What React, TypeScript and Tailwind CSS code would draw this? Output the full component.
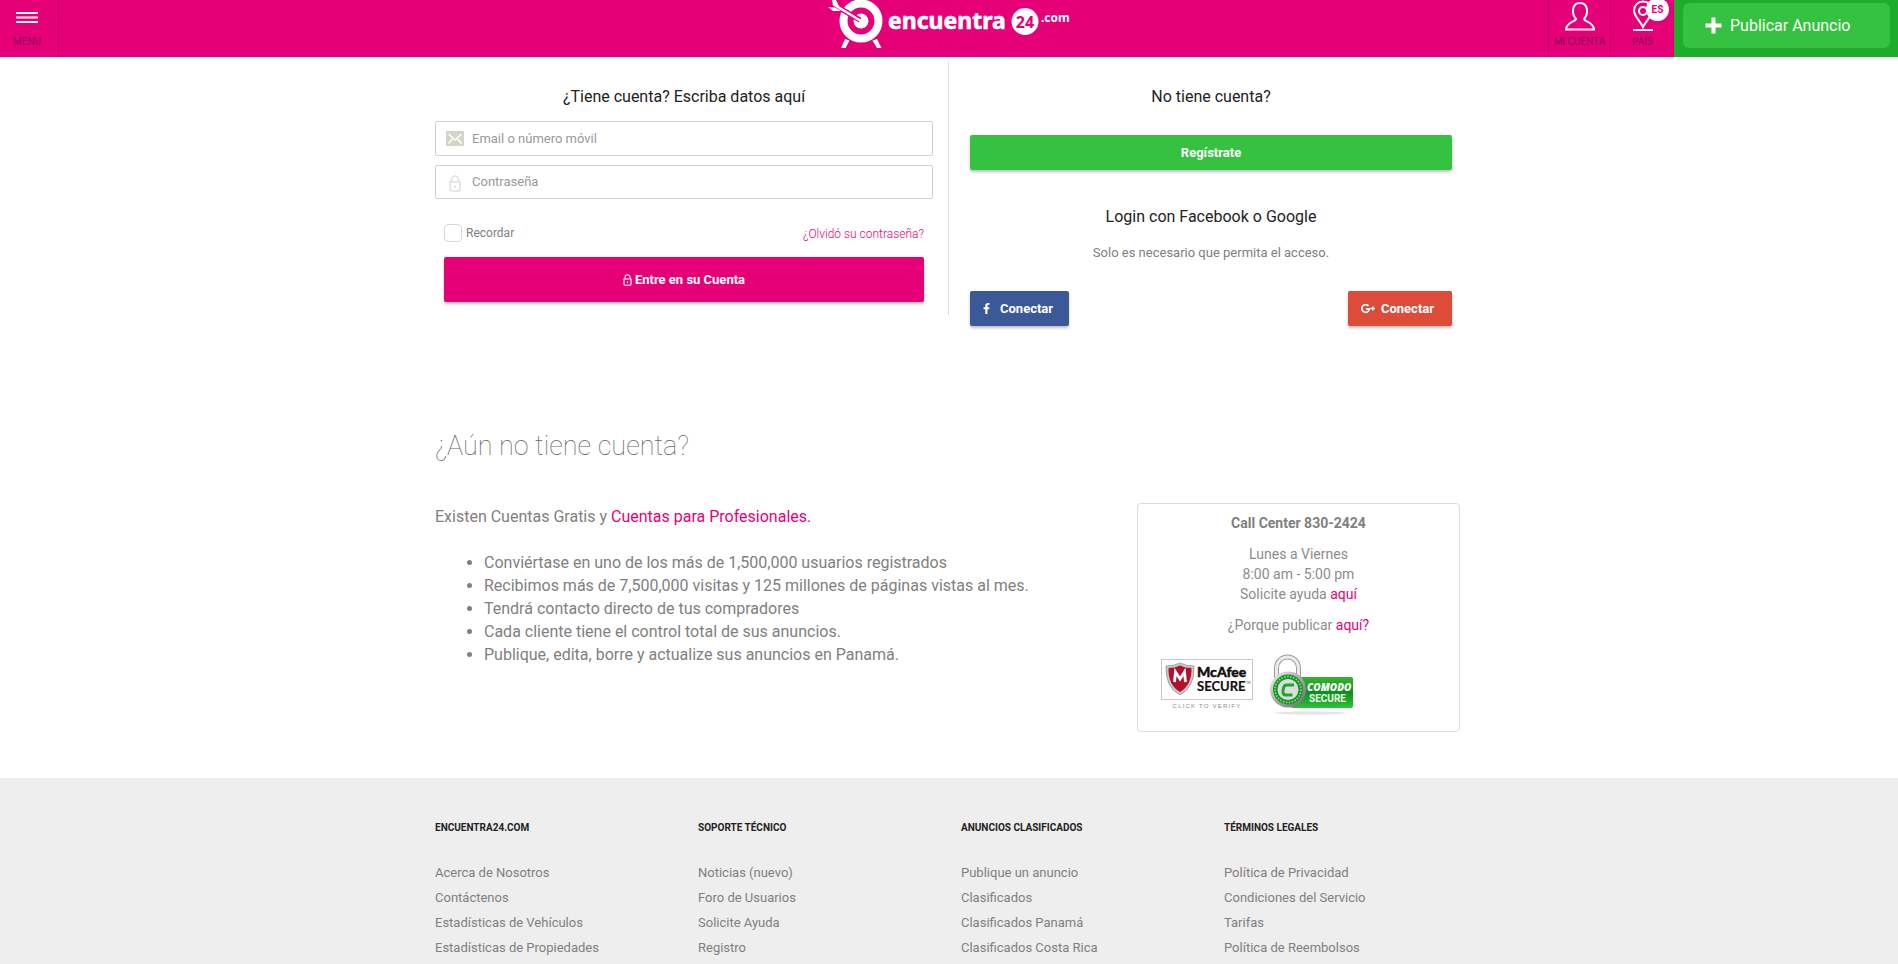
import {FC, ReactNode, useState} from "react";
import {FaFacebookF} from "react-icons/fa";

const footerColumns = [
    {
        title: "ENCUENTRA24.COM",
        links: ["Acerca de Nosotros", "Contáctenos", "Estadísticas de Vehículos", "Estadísticas de Propiedades"],
    },
    {
        title: "SOPORTE TÉCNICO",
        links: ["Noticias (nuevo)", "Foro de Usuarios", "Solicite Ayuda", "Registro"],
    },
    {
        title: "ANUNCIOS CLASIFICADOS",
        links: ["Publique un anuncio", "Clasificados", "Clasificados Panamá", "Clasificados Costa Rica"],
    },
    {
        title: "TÉRMINOS LEGALES",
        links: ["Política de Privacidad", "Condiciones del Servicio", "Tarifas", "Política de Reembolsos"],
    },
];

const benefits = [
    "Conviértase en uno de los más de 1,500,000 usuarios registrados",
    "Recibimos más de 7,500,000 visitas y 125 millones de páginas vistas al mes.",
    "Tendrá contacto directo de tus compradores",
    "Cada cliente tiene el control total de sus anuncios.",
    "Publique, edita, borre y actualize sus anuncios en Panamá.",
];

const Logo:FC = () => (
    <svg width="244" height="57" viewBox="0 0 244 57" role="img" aria-label="encuentra24.com">
        <circle cx="34" cy="21" r="17.5" fill="none" stroke="#fff" strokeWidth="8"/>
        <circle cx="34" cy="21" r="7.5" fill="#fff"/>
        <path d="M9 6 L33 20" stroke="#e60078" strokeWidth="5"/>
        <path d="M6 4 L34 21" stroke="#fff" strokeWidth="2.4"/>
        <path d="M1 7 L8 7.5 L14 11 L6 11 Z M5 0 L9 0 L12 6 L13 10 L6 5 Z" fill="#fff"/>
        <path d="M18 39 L22.5 40.5 L18.500 48 L14 48 Z M50 39 L45.500 40.5 L50 48 L54.500 48 Z" fill="#fff"/>
        <text x="61" y="29" fill="#fff" stroke="#fff" strokeWidth="0.6" fontFamily="'Noto Sans', 'Open Sans', sans-serif" fontWeight="700" fontSize="23">encuentra</text>
        <circle cx="198" cy="21.500" r="13.5" fill="#fff"/>
        <text x="198" y="27.500" fill="#e60078" textAnchor="middle" fontFamily="'Noto Sans', sans-serif" fontWeight="700" fontSize="16">24</text>
        <text x="214" y="22" fill="#fff" fontFamily="'Noto Sans', sans-serif" fontWeight="700" fontSize="12">.com</text>
    </svg>
);

const LockIcon:FC<{className?: string}> = ({className}) => (
    <svg className={className} viewBox="0 0 12 17" fill="none" stroke="currentColor" strokeWidth="1.6">
        <path d="M2.500 7 V4.500 a3.500 3.500 0 0 1 7 0 V7"/>
        <path d="M1 7 H11 V14 a2 2 0 0 1 -2 2 H3 a2 2 0 0 1 -2 -2 Z"/>
        <path d="M6 10.500 V13"/>
    </svg>
);

const MailIcon:FC = () => (
    <svg width="18" height="15" viewBox="0 0 18 15">
        <rect width="18" height="15" rx="1" fill="#d3d5c8"/>
        <path d="M2.500 3 L9 9 L15.500 3 M2.500 12.500 L6.500 8 M15.500 12.500 L11.500 8" stroke="#fff" strokeWidth="1.6" fill="none"/>
    </svg>
);

const McAfeeBadge:FC = () => (
    <svg width="93" height="62" viewBox="0 0 93 62" role="img" aria-label="McAfee SECURE">
        <rect x="0.5" y="5.500" width="91" height="40" fill="#fff" stroke="#c8c8c8"/>
        <path d="M5 12 Q13 12 19 9 Q25 12 33 12 Q34 33 19 41 Q4 33 5 12 Z" fill="#c3c9cf" stroke="#8e979f" strokeWidth="0.8"/>
        <path d="M7.500 14 Q14 14 19 11.500 Q24 14 30.500 14 Q31 31 19 38 Q7 31 7.500 14 Z" fill="#b3112a"/>
        <path d="M13.500 28 L14.500 18 L19 25 L23.500 18 L24.500 28" fill="none" stroke="#fff" strokeWidth="2.800"/>
        <text x="36" y="23" fill="#111" stroke="#111" strokeWidth="0.4" fontFamily="Lato, sans-serif" fontWeight="900" fontSize="14">McAfee</text>
        <text x="36" y="37" fill="#111" stroke="#111" strokeWidth="0.2" fontFamily="Lato, sans-serif" fontWeight="700" fontSize="13">SECURE</text>
        <text x="85" y="30" fill="#444" fontFamily="Lato, sans-serif" fontSize="3">TM</text>
        <text x="46" y="54" fill="#8c8c8c" textAnchor="middle" fontFamily="'Liberation Sans', sans-serif" fontSize="6" letterSpacing="1.200">CLICK TO VERIFY</text>
    </svg>
);

const ComodoBadge:FC = () => (
    <svg width="86" height="62" viewBox="0 0 86 62" role="img" aria-label="Comodo SECURE">
        <defs>
            <linearGradient id="green" x1="0" y1="0" x2="0" y2="1">
                <stop offset="0" stopColor="#35b52f"/>
                <stop offset="0.5" stopColor="#0c8f1b"/>
                <stop offset="1" stopColor="#2fc23a"/>
            </linearGradient>
            <linearGradient id="metal" x1="0" y1="0" x2="1" y2="1">
                <stop offset="0" stopColor="#f5f5f5"/>
                <stop offset="0.5" stopColor="#a9a9a9"/>
                <stop offset="1" stopColor="#6a6a6a"/>
            </linearGradient>
        </defs>
        <ellipse cx="40" cy="59" rx="36" ry="1.500" fill="#e4e4e4"/>
        <rect x="21" y="23" width="62" height="31" rx="2" fill="url(#green)"/>
        <path d="M6.500 26 V14 a11 11 0 0 1 22 0 V26" fill="none" stroke="#9b9b9b" strokeWidth="5"/>
        <path d="M6.500 26 V14 a11 11 0 0 1 22 0 V26" fill="none" stroke="#ececec" strokeWidth="3"/>
        <circle cx="18" cy="35.500" r="18" fill="url(#metal)"/>
        <circle cx="18" cy="35.500" r="15" fill="#17962a"/>
        <circle cx="18" cy="35.500" r="13" fill="none" stroke="#8fe08f" strokeWidth="1.500" strokeDasharray="1.500 1.500"/>
        <circle cx="18" cy="35.500" r="10.500" fill="#dcdcdc"/>
        <path d="M24 31 H17 Q14 31 13.500 34 L13 37 Q12.500 41 16 41 H22.500" fill="none" stroke="#1ea62c" strokeWidth="3"/>
        <text x="37" y="37" fill="#fff" fontFamily="'Open Sans', sans-serif" fontWeight="800" fontStyle="italic" fontSize="10">COMODO</text>
        <text x="39" y="48" fill="#e9f7e9" fontFamily="Roboto, sans-serif" fontWeight="700" fontSize="10">SECURE</text>
    </svg>
);

const PinkLink:FC<{children: ReactNode}> = ({children}) => (
    <a href="#" className="text-[#e60078]">{children}</a>
);

const Header:FC = () => (
    <header className="grid grid-cols-[1fr_auto_1fr] h-[57px] bg-[#e60078]">
        <button className="flex flex-col items-center w-[59px] pt-3 pr-1 border-r border-[#c30070] text-[10px] leading-3 text-[#8a0a5c]">
            <svg width="22" height="11" viewBox="0 0 22 11" className="mb-[13px]">
                <path d="M0 1 H22 M0 5.500 H22 M0 10 H22" stroke="#fff" strokeWidth="2"/>
            </svg>
            MENU
        </button>
        <a href="#"><Logo/></a>
        <div className="flex justify-end">
            <a href="#" className="flex flex-col items-center w-[62px] border-l border-[#c30070] text-[10px] leading-3 text-[#8a0a5c]">
                <svg width="32" height="36" viewBox="0 0 32 36" fill="none" stroke="#fff" strokeWidth="2">
                    <path d="M12 19 C7.500 14 7.500 3 16 3 C24.500 3 24.500 14 20 19 C20 22 29 21 30 29.500 H2 C3 21 12 22 12 19 Z"/>
                </svg>
                MI CUENTA
            </a>
            <a href="#" className="relative flex flex-col items-center w-16 border-l border-[#c30070] text-[10px] leading-3 text-[#8a0a5c]">
                <svg width="22" height="36" viewBox="0 0 22 36" fill="none" stroke="#fff" strokeWidth="2">
                    <path d="M11 27 C8 21 2 16 2 10.500 a9 9 0 0 1 18 0 C20 16 14 21 11 27 Z"/>
                    <circle cx="11" cy="11" r="4"/>
                    <path d="M1 30 H21"/>
                </svg>
                PAÍS
                <span className="absolute -top-0.5 left-[35px] flex items-center justify-center size-[23px] rounded-full bg-white text-[10px] font-bold text-[#e60078]">ES</span>
            </a>
            <div className="pt-[3px] pl-[9px] pr-2 bg-[#1dad2b]">
                <button className="flex items-center gap-2 w-[207px] h-[45px] pl-[22px] rounded-md bg-[#34c240] text-base text-white">
                    <svg width="17" height="17" viewBox="0 0 17 17">
                        <path d="M8.500 0.500 V16.500 M0.500 8.500 H16.500" stroke="#fff" strokeWidth="4"/>
                    </svg>
                    Publicar Anuncio
                </button>
            </div>
        </div>
    </header>
);

const LoginForm:FC = () => {
    const [email, setEmail] = useState("");
    const [password, setPassword] = useState("");

    return (
        <form className="self-start pt-[23px] pr-[15px] pb-[13px] border-r border-[#dcdcdc]">
            <h2 className="mb-3 text-center text-base leading-6 text-[#222]">¿Tiene cuenta? Escriba datos aquí</h2>
            <label className="flex items-center gap-2 h-[35px] pl-2.5 mb-[9px] border border-[#cfcfcb] rounded-xs">
                <MailIcon/>
                <input
                    type="text"
                    aria-label="Email o número móvil"
                    value={email}
                    onChange={(e) => setEmail(e.target.value)}
                    className="flex-1 text-[13px] outline-none placeholder:text-[#999]"
                    placeholder="Email o número móvil"
                />
            </label>
            <label className="flex items-center gap-2 h-[34px] pl-2.5 mb-[25px] border border-[#cfcfcb] rounded-xs">
                <span className="flex justify-center w-[18px] pt-0.5 text-[#e0e0dc]"><LockIcon className="w-3 h-[17px]"/></span>
                <input
                    type="password"
                    aria-label="Contraseña"
                    value={password}
                    onChange={(e) => setPassword(e.target.value)}
                    className="flex-1 text-[13px] outline-none placeholder:text-[#999]"
                    placeholder="Contraseña"
                />
            </label>
            <div className="px-[9px]">
                <div className="flex items-center justify-between h-[18px] mb-[15px]">
                    <label className="flex items-center gap-1 text-xs">
                        <input type="checkbox" className="appearance-none size-[18px] border border-[#d8d8d0] rounded-sm bg-white"/>
                        Recordar
                    </label>
                    <a href="#" className="pt-0.5 text-xs font-light text-[#e60078]">¿Olvidó su contraseña?</a>
                </div>
                <button
                    type="button"
                    className="flex items-center justify-center gap-[3px] w-full h-[45px] rounded-xs bg-[#e60078] text-[13px] font-bold text-white shadow-[0_2px_3px_rgba(0,0,0,0.25)]"
                >
                    <LockIcon className="w-[9px] h-3"/>
                    Entre en su Cuenta
                </button>
            </div>
        </form>
    );
};

const RegisterPanel:FC = () => (
    <div className="pt-[23px] pl-[21px] pr-[11px] text-center">
        <h2 className="mb-[26px] text-base leading-6 text-[#222]">No tiene cuenta?</h2>
        <button className="w-full h-[35px] rounded-xs bg-[#34c240] text-[13px] font-bold text-white shadow-[0_2px_3px_rgba(0,0,0,0.25)]">
            Regístrate
        </button>
        <h2 className="mt-[35px] text-base leading-6 text-[#222]">Login con Facebook o Google</h2>
        <p className="mt-3.5 mb-7 text-[13px] leading-5">Solo es necesario que permita el acceso.</p>
        <div className="flex justify-between text-[13px] font-bold text-white">
            <button className="flex items-center gap-2 h-[35px] pl-[11px] pr-4 rounded-xs bg-[#3b5998] shadow-[0_2px_3px_rgba(0,0,0,0.25)]">
                <FaFacebookF className="size-[11px]"/>
                Conectar
            </button>
            <button className="flex items-center gap-1.5 h-[35px] pl-[13px] pr-[18px] rounded-xs bg-[#dd4b39] shadow-[0_2px_3px_rgba(0,0,0,0.25)]">
                <svg width="14" height="10" viewBox="0 0 14 10" fill="none" stroke="#fff" strokeWidth="1.800">
                    <path d="M7.500 2 A3.800 3.800 0 1 0 8.400 5 H5"/>
                    <path d="M9.500 4.500 H14 M11.750 2.500 V6.500" strokeWidth="1.400"/>
                </svg>
                Conectar
            </button>
        </div>
    </div>
);

const CallCenter:FC = () => (
    <aside className="w-[323px] mr-[3px] pt-[9px] pb-[15px] border border-[#dcdcdc] rounded-sm text-center text-sm leading-5 text-[#8c8c8c]">
        <p className="mb-[11px] font-bold text-[#808080]">Call Center 830-2424</p>
        <p>Lunes a Viernes</p>
        <p>8:00 am - 5:00 pm</p>
        <p className="mb-[11px]">Solicite ayuda <PinkLink>aquí</PinkLink></p>
        <p className="mb-[19px]">¿Porque publicar <PinkLink>aquí?</PinkLink></p>
        <div className="flex gap-4 pl-[23px]">
            <McAfeeBadge/>
            <ComodoBadge/>
        </div>
    </aside>
);

const Footer:FC = () => (
    <footer className="flex-1 pt-[42px] bg-[#eee]">
        <div className="grid grid-cols-4 max-w-[1052px] mx-auto">
            {footerColumns.map((column) => (
                <div key={column.title} className="px-3">
                    <h3 className="mb-6 text-[10px] leading-4 font-bold text-[#222]">{column.title}</h3>
                    <ul className="text-[13px] leading-[25px]">
                        {column.links.map((link) => (
                            <li key={link}><a href="#">{link}</a></li>
                        ))}
                    </ul>
                </div>
            ))}
        </div>
    </footer>
);

export default function App() {
    return (
        <div className="flex flex-col min-h-screen bg-white font-['Roboto',sans-serif] text-[#808080]">
            <Header/>
            <main className="w-full max-w-[1052px] mx-auto px-3 pt-[5px] pb-[46px]">
                <section className="grid grid-cols-2">
                    <LoginForm/>
                    <RegisterPanel/>
                </section>
                <h1 className="mt-[102px] mb-[39px] text-[27px] leading-9 font-thin text-[#666]">¿Aún no tiene cuenta?</h1>
                <section className="flex justify-between">
                    <div className="pt-0.5 text-base leading-[23px]">
                        <p className="mb-[23px]">Existen Cuentas Gratis y <PinkLink>Cuentas para Profesionales.</PinkLink></p>
                        <ul className="pl-[49px] list-disc">
                            {benefits.map((item) => <li key={item}>{item}</li>)}
                        </ul>
                    </div>
                    <CallCenter/>
                </section>
            </main>
            <Footer/>
        </div>
    );
}
